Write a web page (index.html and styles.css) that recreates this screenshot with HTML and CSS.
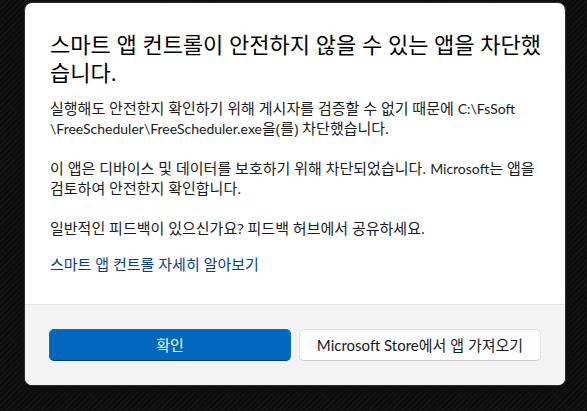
FILE: index.html
```html
<!DOCTYPE html>
<html lang="ko">
<head>
    <meta charset="UTF-8">
    <meta name="viewport" content="width=device-width, initial-scale=1.0">
    <title>스마트 앱 컨트롤</title>
    <link rel="stylesheet" href="styles.css">
</head>
<body>
    <main class="dialog" role="dialog" aria-labelledby="dialogTitle">
        <div class="dialog-content">
            <h1 id="dialogTitle">스마트 앱 컨트롤이 안전하지 않을 수 있는 앱을 차단했습니다.</h1>
            <p>실행해도 안전한지 확인하기 위해 게시자를 검증할 수 없기 때문에 <span class="latin">C:\FsSoft<wbr>\FreeScheduler\FreeScheduler.exe</span>을(를) 차단했습니다.</p>
            <p>이 앱은 디바이스 및 데이터를 보호하기 위해 차단되었습니다. <span class="latin">Microsoft</span>는 앱을 검토하여 안전한지 확인합니다.</p>
            <p>일반적인 피드백이 있으신가요? 피드백 허브에서 공유하세요.</p>
            <a class="learn-more" href="#">스마트 앱 컨트롤 자세히 알아보기</a>
        </div>

        <div class="dialog-buttons">
            <button type="button" class="primary">확인</button>
            <button type="button"><span class="latin">Microsoft Store</span>에서 앱 가져오기</button>
        </div>
    </main>
</body>
</html>
```
FILE: styles.css
```css
* {
    box-sizing: border-box;
}
body {
    margin: 0;
    padding: 3px 22px 26px 25px;
    min-height: 100vh;
    font-family: "Open Sans", "Noto Sans CJK KR", sans-serif;
    font-size: 15px;
    line-height: 20px;
    color: #1a1a1a;
    background: repeating-linear-gradient(135deg, #0c0c0c 0, #0c0c0c 2px, #151515 2px, #151515 4px);
}
/* latin runs look too big next to the hangul */
.latin {
    font-family: Lato, sans-serif;
    font-size: 14px;
    line-height: 1;
}
button .latin {
    font-size: 15px;
}
.dialog {
    background-color: #fff;
    border-radius: 7px;
    overflow: hidden;
    box-shadow: 0 0 0 1px #2b2b2b, 0 2px 12px 6px #101010;
}
.dialog-content {
    padding: 27px 22px 30px 25px;
}
h1 {
    margin: 0 0 12px;
    font-size: 22px;
    line-height: 28px;
    font-weight: 400;
    color: #000;
}
p {
    margin: 0 0 20px;
}
.learn-more {
    display: block;
    margin-top: -4px;
    color: #003e92;
    text-decoration: none;
}
.dialog-buttons {
    display: grid;
    grid-template-columns: 1fr 1fr;
    gap: 8px;
    padding: 24px;
    background-color: #f3f3f3;
    border-top: 1px solid #e5e5e5;
}
button {
    height: 32px;
    padding: 0;
    font: inherit;
    color: #1a1a1a;
    background-color: #fdfdfd;
    border: 1px solid #e0e0e0;
    border-bottom-color: #cccccc;
    border-radius: 5px;
}
button.primary {
    color: #fff;
    background-color: #0067c0;
    border-color: #0f70c4;
    border-bottom-color: #003e73;
}
```
